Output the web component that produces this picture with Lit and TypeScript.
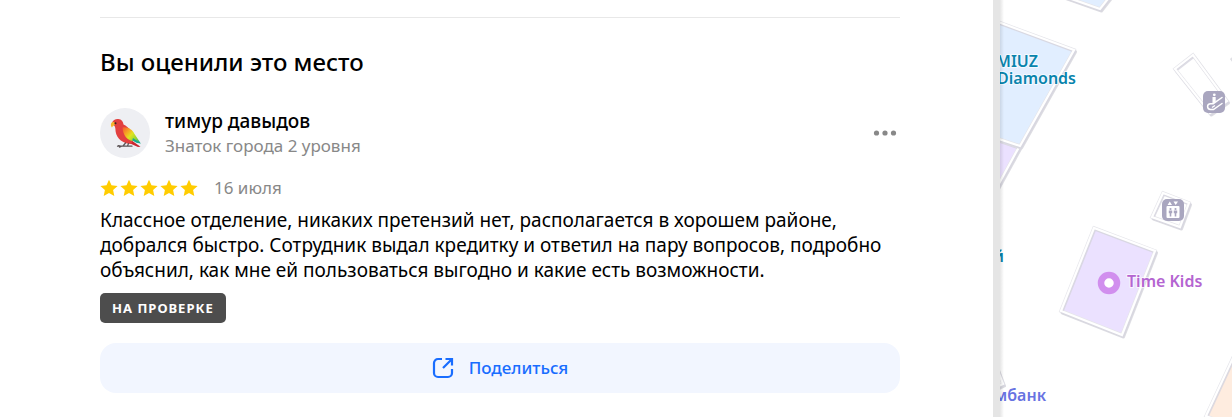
import { LitElement, html, css, svg } from "lit";
import { customElement } from "lit/decorators.js";

const STAR =
  "M9 .8l2.5 5.500 6.100.7-4.500 4.100 1.200 5.900L9 14l-5.300 3 1.200-5.900L.4 7l6.100-.7z";

@customElement("star-rating")
class StarRating extends LitElement {
  static styles = css`
    :host { display: flex; gap: 2px; }
    svg { display: block; }
    path { fill: #ffcc00; }
  `;
  render() {
    return [0, 1, 2, 3, 4].map(
      () => html`<svg width="18" height="18" viewBox="0 0 18 18" aria-hidden="true"><path d=${STAR} /></svg>`
    );
  }
}

@customElement("user-review")
class UserReview extends LitElement {
  static styles = css`
    :host { display: block; }
    .head { display: flex; align-items: center; gap: 15px; }
    .avatar { border-radius: 50%; background: #eeeff3; flex: none; }
    .avatar svg { display: block; }
    .who { flex: 1; min-width: 0; }
    .name { font-size: 19px; line-height: 26px; font-weight: 500; color: #000; }
    .level { font-size: 17px; line-height: 24px; color: #888; }
    .more { border: 0; padding: 0; background: none; width: 30px; height: 30px; cursor: pointer; }
    .more svg { display: block; }
    .meta { display: flex; align-items: center; gap: 16px; margin-top: 18px; font-size: 17px; line-height: 24px; color: #888; }
    .text { margin: 8px 0 10px; font-size: 19px; line-height: 25px; color: #000; }
    .status { display: inline-block; padding: 0 12px; border-radius: 5px; background: #4d4d4d; color: #fff; font-size: 13px; line-height: 30px; font-weight: 700; letter-spacing: 1px; vertical-align: top; }
  `;
  render() {
    return html`
      <div class="head">
        <div class="avatar">
          <svg width="50" height="50" viewBox="0 0 50 50" aria-hidden="true">
            <defs>
              <linearGradient id="wing" x1="22" y1="20" x2="39" y2="35" gradientUnits="userSpaceOnUse">
                <stop offset="0" stop-color="#f4592f" />
                <stop offset=".3" stop-color="#f6a623" />
                <stop offset=".5" stop-color="#e0e41f" />
                <stop offset=".78" stop-color="#8fd435" />
                <stop offset="1" stop-color="#12a98c" />
              </linearGradient>
            </defs>
            <path d="M31 32l9.500 6.800-2.500.2-9-4z" fill="#c9262f" />
            <path d="M12 15c.8-3 3.500-4.200 6.200-4 3.500.3 5 2.800 5.300 5.500 5.500 2.500 9.500 8 10.500 15l-3 4.500c-8-.5-14-5-15.300-12-.3-2.300-.2-4.300-1-5.800z" fill="#e2403f" />
            <path d="M22.500 19.500c5-1 10 2 12 6.500l6.300 9.500-7.300-2.500c-6.500-.3-10.500-6-11-13.500z" fill="url(#wing)" />
            <path d="M33 30l7.800 5.500-4.500-.7-4-2.500z" fill="#18a894" />
            <path d="M14.500 14.200c-2-.8-3.700.2-3.600 2.800 0 1 .4 1.800 1 2.400.8-1.300 2.500-2 3-3.200z" fill="#f4b52b" />
            <circle cx="15.500" cy="15.200" r="1" fill="#33221f" />
            <path d="M17.500 38.200h14.500M23 38l2.500-3M27.500 38l1-2.500M18.500 37.500l3 .7-2 1" fill="none" stroke="#5b5456" stroke-width="1.200" stroke-linecap="round" />
          </svg>
        </div>
        <div class="who">
          <div class="name">тимур давыдов</div>
          <div class="level">Знаток города 2 уровня</div>
        </div>
        <button class="more" type="button" aria-label="Ещё">
          <svg width="30" height="30" viewBox="0 0 30 30" fill="#888" aria-hidden="true">
            <circle cx="6.500" cy="15" r="2.600" /><circle cx="15" cy="15" r="2.600" /><circle cx="23.500" cy="15" r="2.600" />
          </svg>
        </button>
      </div>
      <div class="meta"><star-rating role="img" aria-label="5 из 5"></star-rating><time>16 июля</time></div>
      <p class="text">Классное отделение, никаких претензий нет, располагается в хорошем районе, добрался быстро. Сотрудник выдал кредитку и ответил на пару вопросов, подробно объяснил, как мне ей пользоваться выгодно и какие есть возможности.</p>
      <span class="status">НА ПРОВЕРКЕ</span>
    `;
  }
}

/* A room on the indoor plan: soft shadow, floor, inner shade, white wall. */
const room = (points: string, floor: string) => svg`
  <polygon points=${points} transform="translate(1.500 2)" fill="#dedee3" stroke="#dedee3" stroke-width="3" stroke-linejoin="round" />
  <polygon points=${points} fill=${floor} stroke="#e6e6eb" stroke-width="3.500" />
  <polygon points=${points} transform="translate(1 1.500)" fill="none" stroke="#d6d5de" stroke-width="2.500" stroke-opacity=".8" />
  <polygon points=${points} fill="none" stroke="#fff" stroke-width="2.200" />
`;

@customElement("indoor-map")
class IndoorMap extends LitElement {
  static styles = css`
    :host { display: flex; background: #fff; overflow: hidden; }
    svg { flex: 1; min-width: 0; width: 100%; display: block; }
    text { font: 600 16px "Noto Sans", sans-serif; paint-order: stroke; stroke: #fff; stroke-width: 2px; stroke-opacity: .7; stroke-linejoin: round; }
    .teal { fill: #0984ad; text-anchor: end; }
    .violet { fill: #b465d1; }
    .indigo { fill: #6873e2; text-anchor: end; }
  `;
  render() {
    return html`
      <svg role="img" aria-label="Схема этажа">
        <defs>
          <linearGradient id="edge">
            <stop offset="0" stop-color="#000" stop-opacity=".1" />
            <stop offset="1" stop-color="#000" stop-opacity="0" />
          </linearGradient>
        </defs>
        ${room("60,-5 100,9 111,-5", "#e1eeff")}
        ${room("-10,137 19,147 -10,200", "#ebe1ff")}
        ${room("-10,19 74,50 20,146 -10,136", "#e1eeff")}
        ${room("193,55 175,69 210,113 227,101", "#fff")}
        ${room("163,193 189,203 180,227 152,217", "#fff")}
        ${room("94,228 155,251 122,335 61,311", "#ebe1ff")}
        ${room("245,332 206,416 245,432", "#feecdf")}
        ${room("-10,350 3,384 -10,390", "#fff")}
        <path d="M231 58l6 8" stroke="#e0e0e5" stroke-width="3" />
        <g transform="translate(203 91)">
          <rect width="22" height="22" rx="5" fill="#a9a6bf" />
          <path d="M19 6.500l-8.800 6.200H7.500a2.900 2.900 0 0 0 0 5.800h3l8.500-6" fill="none" stroke="#fff" stroke-width="1.500" stroke-linecap="round" />
          <path d="M9 16.500l3-2" stroke="#fff" stroke-width="1.300" />
          <circle cx="11.300" cy="3.800" r="1.400" fill="#fff" />
          <path d="M9.500 6h3.200v4.500L9.500 12.500z" fill="#fff" />
        </g>
        <g transform="translate(162 199)">
          <rect width="22" height="22" rx="5" fill="#a9a6bf" />
          <path d="M5.500 6l2.300-3.500L10 6zM11.500 2.500H16L13.700 6z" fill="#fff" />
          <rect x="4.500" y="7" width="13" height="12" rx="1" fill="#fff" />
          <g fill="#a9a6bf">
            <circle cx="8.500" cy="10" r="1.100" /><path d="M6.800 11.500h3.400v2.700H9.300V17.500H7.700v-3.300h-.9z" />
            <circle cx="13.500" cy="10" r="1.100" /><path d="M11.800 11.500h3.400v2.700h-.9V17.500h-1.600v-3.300h-.9z" />
          </g>
        </g>
        <circle cx="109" cy="283" r="8" fill="#fff" stroke="#d18fee" stroke-width="6.500" />
        <text class="teal" x="38" y="67">MIUZ</text>
        <text class="teal" x="76" y="84">Diamonds</text>
        <text class="teal" x="4" y="262">й</text>
        <text class="violet" x="127" y="287">Time Kids</text>
        <text class="indigo" x="46" y="401">мбанк</text>
        <rect width="4" height="100%" fill="url(#edge)" />
      </svg>
    `;
  }
}

@customElement("app-root")
class AppRoot extends LitElement {
  static styles = css`
    :host { display: flex; min-height: 100vh; background: #fff; font-family: "Noto Sans", sans-serif; }
    .panel { box-sizing: border-box; flex: 0 1 1000px; min-width: 0; padding: 17px 93px 24px 100px; border-right: 7px solid #e5e5e5; }
    .place { border-top: 1px solid #e8e8e8; }
    h2 { margin: 29px 0 31px; font-size: 24px; line-height: 30px; font-weight: 500; color: #000; }
    .share { display: flex; align-items: center; justify-content: center; gap: 13px; width: 100%; height: 50px; margin-top: 20px; padding: 0; border: 0; border-radius: 16px; background: #f2f6ff; color: #196dff; font: 500 17px/24px "Noto Sans", sans-serif; cursor: pointer; }
    indoor-map { flex: 1 0 200px; }
  `;
  render() {
    return html`
      <main class="panel">
        <section class="place">
          <h2>Вы оценили это место</h2>
          <user-review></user-review>
          <button class="share" type="button">
            <svg width="24" height="24" viewBox="0 0 24 24" fill="none" stroke="#196dff" stroke-width="2.200" aria-hidden="true">
              <path d="M10 3H6a4 4 0 0 0-4 4v10a4 4 0 0 0 4 4h10a4 4 0 0 0 4-4v-4" />
              <path d="M13.500 3h6.500v6.500M19.800 3.200L11 12" />
            </svg>
            <span>Поделиться</span>
          </button>
        </section>
      </main>
      <indoor-map></indoor-map>
    `;
  }
}
